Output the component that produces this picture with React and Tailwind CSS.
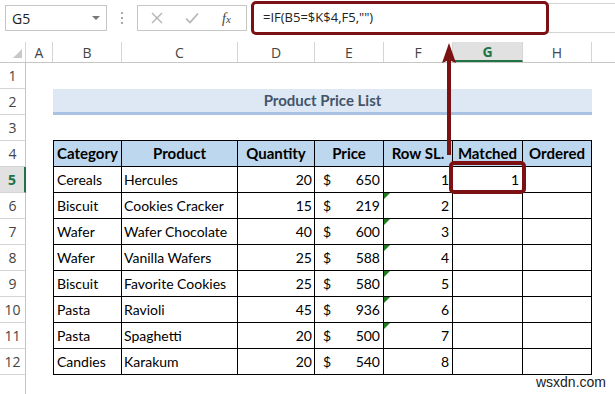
import React from "react";

const cellFont = { fontFamily: "Lato, 'Open Sans', sans-serif" };

const data = [
  ["Cereals", "Hercules", 20, 650, 1, "1"],
  ["Biscuit", "Cookies Cracker", 15, 219, 2, ""],
  ["Wafer", "Wafer Chocolate", 40, 600, 3, ""],
  ["Wafer", "Vanilla Wafers", 25, 588, 4, ""],
  ["Biscuit", "Favorite Cookies", 25, 580, 5, ""],
  ["Pasta", "Ravioli", 45, 936, 6, ""],
  ["Pasta", "Spaghetti", 20, 500, 7, ""],
  ["Candies", "Karakum", 20, 540, 8, ""],
];

const colHeads = [
  { k: "A", w: "w-[27px]" },
  { k: "B", w: "w-[69px]" },
  { k: "C", w: "w-[116px]" },
  { k: "D", w: "w-[77px]" },
  { k: "E", w: "w-[69px]" },
  { k: "F", w: "w-[69px]" },
  { k: "G", w: "w-[70px]" },
  { k: "H", w: "w-[69px]" },
];

const RowHead = ({ n, active }) => (
  <div
    className={
      active
        ? "w-[26px] shrink-0 flex items-center justify-center border-b border-b-[#d4d4d4] border-r-2 border-r-[#217346] bg-[#e1e1e1] text-[#217346] font-bold text-[14px]"
        : "w-[26px] shrink-0 flex items-center justify-center border-b border-b-[#d4d4d4] border-r border-r-[#c6c6c6] text-[#444] text-[14px]"
    }
    style={{ fontFamily: "'Open Sans', sans-serif" }}
  >
    {n}
  </div>
);

// plain sheet row, table cells go in as children
const Row = ({ n, active, children }) => (
  <div className="flex h-[26px]">
    <RowHead n={n} active={active} />
    <div className="w-[27px] shrink-0" />
    {children}
  </div>
);

const GreenTick = () => (
  <span className="absolute left-0 top-0 w-0 h-0 border-t-[6px] border-t-[#1e7b1e] border-r-[6px] border-r-transparent" />
);

export default function App() {
  return (
    <div className="relative w-[615px] h-[394px] overflow-hidden bg-white" style={{ fontFamily: "'Open Sans', sans-serif" }}>
      {/* formula bar */}
      <div className="flex items-center h-[36px]">
        <div className="ml-[5px] w-[102px] h-[26px] border border-[#c6c6c6] flex items-center justify-between pl-[6px] pr-[6px] text-[14px] text-[#222]">
          <span>G5</span>
          <span className="w-0 h-0 border-l-[4px] border-l-transparent border-r-[4px] border-r-transparent border-t-[4px] border-t-[#777]" />
        </div>
        <div className="w-[30px] flex flex-col items-center gap-[3px]">
          <span className="w-[2px] h-[2px] bg-[#aaa]" />
          <span className="w-[2px] h-[2px] bg-[#aaa]" />
          <span className="w-[2px] h-[2px] bg-[#aaa]" />
        </div>
        <div className="w-[110px] h-[26px] border border-[#c6c6c6] flex items-center">
          <svg className="ml-[13px]" width="12" height="12" viewBox="0 0 12 12">
            <path d="M1 1L11 11M11 1L1 11" stroke="#b3b3b3" strokeWidth="1.4" />
          </svg>
          <svg className="ml-[22px]" width="14" height="12" viewBox="0 0 14 12">
            <path d="M1 6.5L5 10.5L13 1.5" stroke="#b3b3b3" strokeWidth="1.6" fill="none" />
          </svg>
          <span className="ml-[23px] italic text-[14px] text-[#444]" style={{ fontFamily: "'Liberation Serif', serif" }}>
            f<span className="text-[11px]">x</span>
          </span>
        </div>
        <div className="ml-[5px] flex-1 h-[30px] border-y border-l border-[#d4d4d4] flex items-center pl-[10px] text-[13px] text-[#222]">
          =IF(B5=$K$4,F5,"")
        </div>
      </div>
      <div className="h-[6px]" />

      {/* column headers */}
      <div className="flex h-[21px] border-b border-[#c6c6c6] text-[14px] text-[#444]">
        <div className="relative w-[26px] shrink-0 border-r border-[#d4d4d4]">
          <span className="absolute right-[3px] bottom-[4px] w-0 h-0 border-l-[9px] border-l-transparent border-b-[9px] border-b-[#c8c8c8]" />
        </div>
        {colHeads.map((c) =>
          c.k === "G" ? (
            <div key={c.k} className={`${c.w} shrink-0 flex items-center justify-center bg-[#e1e1e1] border-r border-[#d4d4d4] border-b-2 border-b-[#217346] text-[#217346] font-bold`}>
              {c.k}
            </div>
          ) : (
            <div key={c.k} className={`${c.w} shrink-0 flex items-center justify-center border-r border-[#d4d4d4]`}>
              {c.k}
            </div>
          )
        )}
        <div className="flex-1" />
      </div>

      <div style={cellFont} className="text-[14px] text-black">
        <Row n={1} />
        <Row n={2}>
          <div className="w-[539px] h-full bg-[#dde8f4] border-b-[3px] border-[#a9c2e2] flex items-center justify-center font-bold text-[#44546a] text-[15px]">
            Product Price List
          </div>
        </Row>
        <Row n={3}>
          <div className="w-[539px] h-full border-b border-black" />
        </Row>
        <Row n={4}>
          <div className="flex h-full font-bold text-[15px] bg-[#bdd7ee]">
            <div className="w-[69px] border-l border-r border-b border-black flex items-center justify-center">Category</div>
            <div className="w-[116px] border-r border-b border-black flex items-center justify-center">Product</div>
            <div className="w-[77px] border-r border-b border-black flex items-center justify-center">Quantity</div>
            <div className="w-[69px] border-r border-b border-black flex items-center justify-center">Price</div>
            <div className="w-[69px] border-r border-b border-black flex items-center justify-center">Row SL.</div>
            <div className="w-[70px] border-r border-b border-black flex items-center justify-center">Matched</div>
            <div className="w-[69px] border-r border-b border-black flex items-center justify-center">Ordered</div>
          </div>
        </Row>
        {data.map((r, i) => (
          <Row key={i} n={i + 5} active={i === 0}>
            <div className="flex h-full">
              <div className="w-[69px] border-l border-r border-b border-black flex items-center pl-[3px]">{r[0]}</div>
              <div className="w-[116px] border-r border-b border-black flex items-center pl-[2px]">{r[1]}</div>
              <div className="w-[77px] border-r border-b border-black flex items-center justify-end pr-[2px]">{r[2]}</div>
              <div className="w-[69px] border-r border-b border-black flex items-center justify-between pl-[8px] pr-[3px]">
                <span>$</span>
                <span>{r[3]}</span>
              </div>
              <div className="relative w-[69px] border-r border-b border-black flex items-center justify-end pr-[3px]">
                {i > 0 && i < 7 && <GreenTick />}
                {r[4]}
              </div>
              <div className="w-[70px] border-r border-b border-black flex items-center justify-end pr-[3px]">{r[5]}</div>
              <div className="w-[69px] border-r border-b border-black" />
            </div>
          </Row>
        ))}
        <div className="flex h-[30px]">
          <div className="w-[26px] border-r border-[#c6c6c6]" />
        </div>
      </div>

      {/* callouts */}
      <div className="absolute left-[251px] top-[1px] w-[298px] h-[34px] border-[3px] border-[#7b1113] rounded-[5px]" />
      <div className="absolute left-[449px] top-[161px] w-[77px] h-[33px] border-[4px] border-[#7b1113] rounded-[5px]" />
      <svg className="absolute left-[440px] top-[42px]" width="18" height="115" viewBox="0 0 18 115">
        <rect x="7" y="16" width="4" height="97" fill="#7b1113" />
        <polygon points="9,1 16,21 9,18 2,21" fill="#7b1113" />
      </svg>

      <div className="absolute right-[9px] bottom-[1px] text-[14px] text-[#222]" style={{ fontFamily: "'Liberation Sans', Arial, sans-serif" }}>
        wsxdn.com
      </div>
    </div>
  );
}
